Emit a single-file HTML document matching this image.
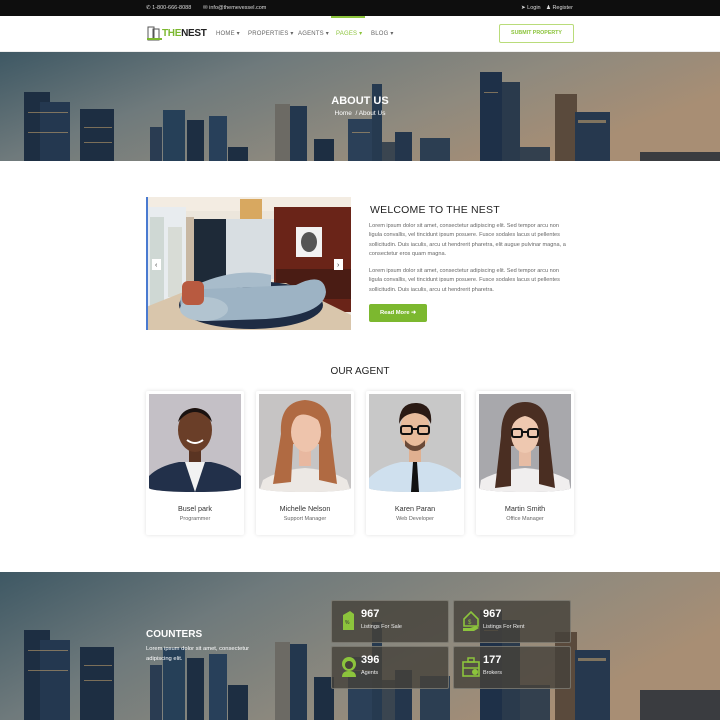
<!DOCTYPE html>
<html style="width:720px;height:720px;overflow:hidden"><head><meta charset="utf-8">
<style>
*{margin:0;padding:0;box-sizing:border-box}
body{width:720px;height:720px;overflow:hidden;background:#fff;font-family:"Liberation Sans",sans-serif;color:#333;position:relative}
.abs{position:absolute}
.top{left:0;top:0;width:720px;height:16px;background:#0e0e0e;color:#ddd;font-size:5.5px}
.top span{position:absolute;top:5px}
.nav{left:0;top:16px;width:720px;height:36px;background:#fff;border-bottom:1px solid #eee}
.nav .m{position:absolute;top:14px;font-size:6px;color:#666;letter-spacing:.2px}
.btn{left:499px;top:24px;width:75px;height:19px;border:1.5px solid #b9dc7a;border-radius:2px;color:#8cc43c;font-size:5.3px;font-weight:bold;text-align:center;line-height:16px}
.hero{left:0;top:52px;width:720px;height:109px;overflow:hidden}
.p{font-size:5.6px;line-height:9.3px;color:#666}
.card{width:98px;height:144px;top:391px;background:#fff;box-shadow:0 0 4px rgba(0,0,0,.12);border-radius:2px}
.card .ph{position:absolute;left:3px;top:3px;width:92px;height:98px;overflow:hidden;border-radius:0 0 46px 46px/0 0 4px 4px}
.card .n{position:absolute;top:113px;width:100%;text-align:center;font-size:7.2px;color:#333}
.card .r{position:absolute;top:125px;width:100%;text-align:center;font-size:5.5px;color:#666}
.box{width:118px;height:43px;background:rgba(70,66,58,.82);border:1px solid rgba(200,200,190,.35);border-radius:2px;color:#fff}
.box b{position:absolute;left:29px;top:7px;font-size:11px}
.box i{position:absolute;left:29px;top:23px;font-size:5.5px;font-style:normal;color:#eee}
.box svg{position:absolute;left:8px;top:9px}
</style></head><body>

<div class="abs top">
<span style="left:146px">&#9990; 1-800-666-8088</span>
<span style="left:203px">&#9993; info@themevessel.com</span>
<span style="left:521px">&#10148; Login</span>
<span style="left:546px">&#9823; Register</span>
</div>
<div class="abs nav">
<div class="abs" style="left:331px;top:0;width:34px;height:2px;background:#8cc43c"></div>
<svg class="abs" style="left:147px;top:9px" width="16" height="16" viewBox="0 0 16 16"><rect x="1" y="2" width="6" height="13" fill="none" stroke="#555" stroke-width="1"/><rect x="6" y="4" width="6" height="11" fill="none" stroke="#555" stroke-width="1"/><rect x="0" y="13" width="15" height="2" fill="#7cb82f"/></svg>
<div class="abs" style="left:162px;top:12px;font-size:10px;font-weight:bold;letter-spacing:-.3px"><span style="color:#7cb82f">THE</span><span style="color:#222">NEST</span></div>
<span class="m" style="left:216px">HOME ▾</span>
<span class="m" style="left:248px">PROPERTIES ▾</span>
<span class="m" style="left:298px">AGENTS ▾</span>
<span class="m" style="left:336px;color:#8cc43c">PAGES ▾</span>
<span class="m" style="left:371px">BLOG ▾</span>
</div>
<div class="abs btn">SUBMIT PROPERTY</div>

<svg width="0" height="0" style="position:absolute;left:0;top:0"><defs>
<linearGradient id="sky" x1="0" y1="0" x2="1" y2="0.4"><stop offset="0" stop-color="#3e5864"/><stop offset=".35" stop-color="#6f7a7c"/><stop offset=".7" stop-color="#8f8a7e"/><stop offset="1" stop-color="#a88e74"/></linearGradient>
<g id="city" fill="#1d2e42">
<rect x="24" y="40" width="26" height="200"/><rect x="40" y="50" width="30" height="200" fill="#243850"/>
<rect x="80" y="57" width="34" height="200"/><rect x="150" y="75" width="12" height="200" fill="#2a3c52"/>
<rect x="163" y="58" width="22" height="200" fill="#264058"/><rect x="187" y="68" width="17" height="200"/>
<rect x="209" y="64" width="18" height="200" fill="#28405a"/><rect x="228" y="95" width="20" height="200"/>
<rect x="275" y="52" width="15" height="200" fill="#6c6a64"/><rect x="290" y="54" width="17" height="200" fill="#23374e"/>
<rect x="314" y="87" width="20" height="200"/><rect x="348" y="67" width="25" height="200" fill="#2b4058"/>
<rect x="372" y="32" width="10" height="200" fill="#263a50"/><rect x="382" y="90" width="20" height="200" fill="#3a4550"/>
<rect x="395" y="80" width="17" height="200" fill="#24364c"/><rect x="420" y="86" width="30" height="200" fill="#2c3e52"/>
<rect x="480" y="20" width="22" height="200" fill="#1e3048"/><rect x="502" y="30" width="18" height="200" fill="#2a3a4c"/>
<rect x="520" y="95" width="30" height="200" fill="#33404e"/>
<rect x="555" y="42" width="22" height="200" fill="#5a4a3c"/><rect x="575" y="60" width="35" height="200" fill="#26384e"/>
<rect x="640" y="100" width="80" height="200" fill="#3a3c40"/>
<g fill="#d9b070" opacity=".5"><rect x="28" y="60" width="40" height="1"/><rect x="28" y="80" width="40" height="1"/><rect x="84" y="75" width="28" height="1"/><rect x="84" y="90" width="28" height="1"/><rect x="578" y="68" width="28" height="3"/><rect x="352" y="80" width="18" height="1"/><rect x="484" y="40" width="14" height="1"/></g>
</g></defs></svg>

<div class="abs hero">
<svg width="720" height="109" style="display:block"><rect width="720" height="109" fill="url(#sky)"/><use href="#city"/></svg>
<div class="abs" style="left:0;top:43px;width:720px;text-align:center;color:#fff;font-size:11px;font-weight:bold">ABOUT US</div>
<div class="abs" style="left:0;top:58px;width:720px;text-align:center;color:#fff;font-size:6.5px">Home &nbsp;/ About Us</div>
</div>

<svg class="abs" style="left:146px;top:197px" width="205" height="133" viewBox="0 0 205 133">
<rect width="205" height="133" fill="#ece6dc"/>
<rect x="0" y="0" width="205" height="14" fill="#f3ece2"/>
<rect x="0" y="10" width="40" height="110" fill="#e8ecef"/>
<rect x="4" y="20" width="14" height="90" fill="#cfd8d4"/><rect x="22" y="30" width="14" height="70" fill="#d8dcd6"/>
<rect x="40" y="20" width="8" height="90" fill="#c8b8a4"/>
<rect x="48" y="22" width="32" height="70" fill="#1e2a38"/>
<rect x="80" y="22" width="48" height="60" fill="#d8dee2"/>
<rect x="128" y="10" width="77" height="105" fill="#6a2418"/>
<rect x="150" y="30" width="26" height="30" fill="#f2f2f2"/><ellipse cx="163" cy="45" rx="8" ry="10" fill="#555"/>
<rect x="130" y="72" width="75" height="30" fill="#4a1c14"/>
<rect x="94" y="2" width="22" height="20" fill="#d8a860"/>
<path d="M0 133 L0 110 L60 86 L140 86 L205 118 L205 133Z" fill="#d9c6ac"/>
<ellipse cx="105" cy="108" rx="72" ry="24" fill="#1e2c44"/>
<path d="M50 88 Q90 70 125 78 L125 92 Q90 86 52 100Z" fill="#a8bccb"/>
<path d="M35 110 Q30 90 60 92 L150 88 Q178 74 180 95 Q178 118 120 122 L60 124 Q35 124 35 110Z" fill="#9db3c4"/>
<ellipse cx="58" cy="112" rx="24" ry="12" fill="#b2c4d0"/>
<rect x="36" y="84" width="22" height="24" rx="6" fill="#b85a40"/>
<rect x="6" y="62" width="9" height="11" fill="#fff"/><rect x="188" y="62" width="9" height="11" fill="#fff"/>
<text x="9" y="70" font-size="7" fill="#333" font-family="Liberation Sans">‹</text><text x="191" y="70" font-size="7" fill="#333" font-family="Liberation Sans">›</text>
<rect x="0" y="0" width="2" height="133" fill="#4a7ad0"/>
</svg>

<div class="abs" style="left:370px;top:204px;font-size:10.5px;color:#222;letter-spacing:.2px">WELCOME TO THE NEST</div>
<div class="abs p" style="left:369px;top:222px;width:200px">Lorem ipsum dolor sit amet, consectetur adipiscing elit. Sed tempor arcu non ligula convallis, vel tincidunt ipsum posuere. Fusce sodales lacus ut pellentes sollicitudin. Duis iaculis, arcu ut hendrerit pharetra, elit augue pulvinar magna, a consectetur eros quam magna.</div>
<div class="abs p" style="left:369px;top:267px;width:200px">Lorem ipsum dolor sit amet, consectetur adipiscing elit. Sed tempor arcu non ligula convallis, vel tincidunt ipsum posuere. Fusce sodales lacus ut pellentes sollicitudin. Duis iaculis, arcu ut hendrerit pharetra.</div>
<div class="abs" style="left:369px;top:304px;width:58px;height:18px;background:#7cb82f;border-radius:2px;color:#fff;font-size:5.8px;font-weight:bold;text-align:center;line-height:18px">Read More &#10140;</div>

<div class="abs" style="left:0;top:366px;width:720px;text-align:center;font-size:10px;color:#222">OUR AGENT</div>

<div class="abs card" style="left:146px"><div class="ph" style="background:#c4c0c6"><svg width="92" height="98"><path d="M0 98 L0 82 Q10 72 30 68 L62 68 Q82 72 92 82 L92 98Z" fill="#22304a"/><path d="M36 68 L46 98 L56 68Z" fill="#f2f2f2"/><rect x="40" y="52" width="12" height="16" fill="#5a3422"/><ellipse cx="46" cy="36" rx="17" ry="22" fill="#6a3e28"/><path d="M29 28 Q46 8 63 28 Q60 15 46 14 Q32 15 29 28Z" fill="#1a1210"/><path d="M38 46 Q46 52 54 46" stroke="#fff" stroke-width="2" fill="none"/></svg></div><div class="n">Busel park</div><div class="r">Programmer</div></div>
<div class="abs card" style="left:256px"><div class="ph" style="background:#c6c4c4"><svg width="92" height="98"><path d="M0 98 L4 86 Q20 76 46 74 Q72 76 88 86 L92 98Z" fill="#ece8e4"/><path d="M22 40 Q20 8 46 6 Q74 8 72 42 L78 90 L60 86 L60 50 L34 50 L32 88 L14 90Z" fill="#b06a42"/><rect x="40" y="56" width="12" height="16" fill="#e8b8a0"/><ellipse cx="47" cy="38" rx="15" ry="20" fill="#eec4ac"/><path d="M32 30 Q40 12 62 28 Q58 16 46 15 Q34 17 32 30Z" fill="#b06a42"/></svg></div><div class="n">Michelle Nelson</div><div class="r">Support Manager</div></div>
<div class="abs card" style="left:366px"><div class="ph" style="background:#c8c8c8"><svg width="92" height="98"><path d="M0 98 L0 84 Q12 72 32 68 L60 68 Q80 72 92 84 L92 98Z" fill="#cfe0ee"/><path d="M44 68 L48 68 L50 98 L42 98Z" fill="#111"/><rect x="40" y="52" width="12" height="16" fill="#e0b090"/><ellipse cx="46" cy="36" rx="15" ry="20" fill="#e8bc9c"/><path d="M30 30 Q30 8 48 9 Q64 10 62 30 Q58 20 46 19 Q34 20 30 30Z" fill="#2a1a14"/><g fill="none" stroke="#111" stroke-width="2"><rect x="32" y="32" width="11" height="8" rx="2"/><rect x="49" y="32" width="11" height="8" rx="2"/><path d="M43 35 L49 35"/></g><path d="M36 46 Q46 58 56 46 L56 52 Q46 62 36 52Z" fill="#6a4a38"/></svg></div><div class="n">Karen Paran</div><div class="r">Web Developer</div></div>
<div class="abs card" style="left:476px"><div class="ph" style="background:#a8a8ac"><svg width="92" height="98"><path d="M0 98 L2 86 Q20 76 46 74 Q72 76 90 86 L92 98Z" fill="#f0eeee"/><path d="M22 42 Q22 8 46 8 Q70 8 70 42 L76 94 L60 90 L60 52 L32 52 L32 92 L16 94Z" fill="#4a2e22"/><rect x="40" y="56" width="12" height="16" fill="#e6bca4"/><ellipse cx="46" cy="40" rx="14" ry="19" fill="#eec8b0"/><path d="M32 34 Q36 16 50 18 Q60 20 60 34 Q56 24 46 22 Q36 24 32 34Z" fill="#4a2e22"/><g fill="none" stroke="#111" stroke-width="2"><rect x="33" y="35" width="10" height="8" rx="2"/><rect x="49" y="35" width="10" height="8" rx="2"/><path d="M43 38 L49 38"/></g></svg></div><div class="n">Martin Smith</div><div class="r">Office Manager</div></div>

<div class="abs" style="left:0;top:572px;width:720px;height:148px;overflow:hidden">
<svg width="720" height="148" style="display:block"><rect width="720" height="148" fill="url(#sky)"/><use href="#city" transform="translate(0,18)"/></svg>
<div class="abs" style="left:146px;top:57px;color:#fff;font-size:10px;font-weight:bold">COUNTERS</div>
<div class="abs" style="left:146px;top:73px;color:#fff;font-size:5.8px;line-height:9.5px;width:130px">Lorem ipsum dolor sit amet, consectetur adipiscing elit.</div>
</div>
<div class="abs box" style="left:331px;top:600px"><svg width="16" height="22" viewBox="0 0 16 22"><path d="M3 5 L10 1 L14 4 L14 20 L3 20Z" fill="#8cc43c"/><text x="5" y="14" font-size="5" fill="#333" font-family="Liberation Sans">%</text></svg><b>967</b><i>Listings For Sale</i></div>
<div class="abs box" style="left:453px;top:600px"><svg width="18" height="22" viewBox="0 0 18 22"><path d="M2 9 L9 2 L16 9 L16 16 L2 16Z" fill="none" stroke="#8cc43c" stroke-width="1.6"/><path d="M1 18 L8 18 L14 16 L17 18 L12 21 L1 21Z" fill="#8cc43c"/><text x="6" y="14" font-size="6" fill="#8cc43c" font-family="Liberation Sans">$</text></svg><b>967</b><i>Listings For Rent</i></div>
<div class="abs box" style="left:331px;top:646px"><svg width="18" height="22" viewBox="0 0 18 22"><circle cx="9" cy="8" r="7" fill="#8cc43c"/><circle cx="9" cy="9" r="4" fill="#46423a"/><path d="M2 21 Q2 15 9 15 Q16 15 16 21Z" fill="#8cc43c"/></svg><b>396</b><i>Agents</i></div>
<div class="abs box" style="left:453px;top:646px"><svg width="18" height="22" viewBox="0 0 18 22"><rect x="1" y="6" width="16" height="14" fill="none" stroke="#8cc43c" stroke-width="1.6"/><rect x="6" y="2" width="6" height="4" fill="none" stroke="#8cc43c" stroke-width="1.5"/><path d="M1 12 L17 12" stroke="#8cc43c" stroke-width="1.5"/><circle cx="13" cy="16" r="3" fill="#8cc43c"/></svg><b>177</b><i>Brokers</i></div>
</body></html>
